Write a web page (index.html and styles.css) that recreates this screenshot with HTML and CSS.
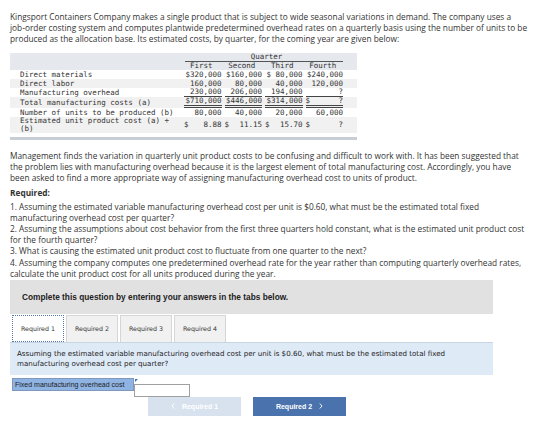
FILE: index.html
```html
<!DOCTYPE html>
<html lang="en">
<head>
    <meta charset="UTF-8">
    <meta name="viewport" content="width=device-width, initial-scale=1.0">
    <title>Kingsport Containers Company</title>
    <link rel="stylesheet" href="styles.css">
</head>
<body>
    <div class="page">
        <p class="text">Kingsport Containers Company makes a single product that is subject to wide seasonal variations in demand. The company uses a job&#8209;order costing system and computes plantwide predetermined overhead rates on a quarterly basis using the number of units to be produced as the allocation base. Its estimated costs, by quarter, for the coming year are given below:</p>

        <div class="table-wrap">
            <table class="costs">
                <thead>
                    <tr>
                        <th class="label"></th>
                        <th colspan="4" class="quarter"><span>Quarter</span></th>
                        <th class="spacer"></th>
                    </tr>
                    <tr>
                        <th class="label"></th>
                        <th class="num-head">First</th>
                        <th class="num-head">Second</th>
                        <th class="num-head">Third</th>
                        <th class="num-head">Fourth</th>
                        <th class="spacer"></th>
                    </tr>
                </thead>
                <tbody>
                    <tr>
                        <td class="label">Direct materials</td>
                        <td class="num">$320,000</td>
                        <td class="num">$160,000</td>
                        <td class="num">$ 80,000</td>
                        <td class="num">$240,000</td>
                        <td class="spacer"></td>
                    </tr>
                    <tr>
                        <td class="label">Direct labor</td>
                        <td class="num">160,000</td>
                        <td class="num">80,000</td>
                        <td class="num">40,000</td>
                        <td class="num">120,000</td>
                        <td class="spacer"></td>
                    </tr>
                    <tr>
                        <td class="label">Manufacturing overhead</td>
                        <td class="num"><span class="single">230,000</span></td>
                        <td class="num"><span class="single">206,000</span></td>
                        <td class="num"><span class="single">194,000</span></td>
                        <td class="num"><span class="single">?</span></td>
                        <td class="spacer"></td>
                    </tr>
                    <tr>
                        <td class="label">Total manufacturing costs (a)</td>
                        <td class="num"><span class="double">$710,000</span></td>
                        <td class="num"><span class="double">$446,000</span></td>
                        <td class="num"><span class="double">$314,000</span></td>
                        <td class="num"><span class="double cash"><span>$</span><span>?</span></span></td>
                        <td class="spacer"></td>
                    </tr>
                    <tr>
                        <td class="label">Number of units to be produced (b)</td>
                        <td class="num">80,000</td>
                        <td class="num">40,000</td>
                        <td class="num">20,000</td>
                        <td class="num">60,000</td>
                        <td class="spacer"></td>
                    </tr>
                    <tr>
                        <td class="label">Estimated unit product cost (a) ÷ (b)</td>
                        <td class="num"><span class="cash"><span>$</span><span>8.88</span></span></td>
                        <td class="num"><span class="cash"><span>$</span><span>11.15</span></span></td>
                        <td class="num"><span class="cash"><span>$</span><span>15.70</span></span></td>
                        <td class="num"><span class="cash"><span>$</span><span>?</span></span></td>
                        <td class="spacer"></td>
                    </tr>
                </tbody>
            </table>
        </div>

        <p class="text">Management finds the variation in quarterly unit product costs to be confusing and difficult to work with. It has been suggested that the problem lies with manufacturing overhead because it is the largest element of total manufacturing cost. Accordingly, you have been asked to find a more appropriate way of assigning manufacturing overhead cost to units of product.</p>

        <div class="required">
            <p class="text req-title">Required:</p>
            <p class="text">1. Assuming the estimated variable manufacturing overhead cost per unit is $0.60, what must be the estimated total fixed manufacturing overhead cost per quarter?</p>
            <p class="text">2. Assuming the assumptions about cost behavior from the first three quarters hold constant, what is the estimated unit product cost for the fourth quarter?</p>
            <p class="text">3. What is causing the estimated unit product cost to fluctuate from one quarter to the next?</p>
            <p class="text">4. Assuming the company computes one predetermined overhead rate for the year rather than computing quarterly overhead rates, calculate the unit product cost for all units produced during the year.</p>
        </div>

        <div class="prompt">Complete this question by entering your answers in the tabs below.</div>

        <div class="tabs">
            <button class="tab active">Required 1</button>
            <button class="tab">Required 2</button>
            <button class="tab">Required 3</button>
            <button class="tab">Required 4</button>
        </div>

        <div class="panel">Assuming the estimated variable manufacturing overhead cost per unit is $0.60, what must be the estimated total fixed manufacturing overhead cost per quarter?</div>

        <div class="answer-row">
            <label class="answer-label" for="fixed-cost">Fixed manufacturing overhead cost</label>
            <span class="answer-box"><input id="fixed-cost" class="answer-input" type="text"></span>
        </div>

        <div class="nav">
            <button class="nav-btn prev" disabled>
                <svg width="4" height="6" viewBox="0 0 4 6"><path d="M3.2 0.5 L1 3 L3.2 5.5" fill="none" stroke="#fff" stroke-width="0.9"/></svg>
                <span>Required 1</span>
            </button>
            <button class="nav-btn next">
                <span>Required 2</span>
                <svg width="4" height="6" viewBox="0 0 4 6"><path d="M0.8 0.5 L3 3 L0.8 5.5" fill="none" stroke="#fff" stroke-width="0.9"/></svg>
            </button>
        </div>
    </div>
</body>
</html>
```

FILE: styles.css
```css
body {
    margin: 0;
    font-family: "Open Sans", "Liberation Sans", sans-serif;
    color: #333;
    background-color: #fff;
}
.page {
    padding: 11px 30px 0 10px;
}
.text {
    margin: 0;
    font-size: 8.3px;
    line-height: 11.2px;
}

/* cost table */
.table-wrap {
    width: 347px;
    margin-top: 8px;
    padding-bottom: 4px;
    border-bottom: 3px solid #c9cdd6;
    margin-bottom: 10px;
}
.costs {
    border-collapse: collapse;
    width: 347px;
    font-family: "DejaVu Sans Mono", monospace;
    font-size: 7.5px;
    color: #333;
}
.costs th {
    font-weight: normal;
    background-color: #e5e8ed;
    height: 8.7px;
    line-height: 8px;
    padding: 0;
}
.costs td {
    padding: 0;
    height: 9px;
    line-height: 7.8px;
    vertical-align: middle;
}
.costs tbody tr:nth-child(even) {
    background-color: #f1f1f1;
}
.costs .label {
    width: 161px;
    padding-left: 10px;
    text-align: left;
}
.costs .spacer {
    width: 14px;
}
.quarter span {
    display: block;
    margin-left: 4px;
    margin-right: -5px;
    border-bottom: 1px solid #555;
    text-align: center;
}
.num-head {
    width: 40.5px;
    text-align: center;
}
.num {
    width: 40.5px;
    text-align: right;
    white-space: pre;
}
.single, .double {
    display: block;
    margin-left: 3px;
}
.single {
    border-bottom: 1px solid #444;
}
.double {
    border-bottom: 3px double #444;
}
.cash {
    display: flex;
    justify-content: space-between;
    margin-left: 3px;
}

.required {
    margin-top: 4px;
}
.req-title {
    font-weight: bold;
    margin-bottom: 2px;
}

/* answer area */
.prompt {
    width: 459px;
    margin-top: 1px;
    padding: 11px 12px;
    height: 12px;
    line-height: 12px;
    background-color: #e1e1e1;
    font-family: "Liberation Sans", Arial, sans-serif;
    font-size: 8.3px;
    font-weight: bold;
    color: #222;
}
.tabs {
    display: flex;
    gap: 2px;
    margin-top: 1px;
    padding-left: 2px;
}
.tab {
    width: 52px;
    height: 27px;
    padding: 0;
    background-color: #f1f1f1;
    border: 1px solid #d6d6d6;
    border-bottom: none;
    font-family: "DejaVu Sans", Verdana, sans-serif;
    font-size: 6.3px;
    color: #333;
}
.tab.active {
    background-color: #fff;
    border: 1px dotted #5577aa;
}
.panel {
    width: 469px;
    padding: 6px 7px 6px 7px;
    background-color: #dfeaf7;
    border-top: 1px solid #c8d4e2;
    font-family: "DejaVu Sans", Verdana, sans-serif;
    font-size: 7.1px;
    line-height: 10px;
    color: #222;
}
.answer-row {
    display: flex;
    margin-top: 3px;
    padding-left: 2px;
    height: 13px;
}
.answer-label {
    width: 118px;
    padding-left: 2px;
    background-color: #8fb3e2;
    border: 1px solid #7f99bd;
    font-family: "Liberation Sans", Arial, sans-serif;
    font-size: 7px;
    line-height: 11px;
    color: #222;
}
.answer-box {
    position: relative;
    display: block;
}
.answer-box::before {
    content: "";
    position: absolute;
    left: 1px;
    top: 1px;
    border-top: 3px solid #3d6fc0;
    border-right: 3px solid transparent;
}
.answer-input {
    box-sizing: border-box;
    width: 56px;
    height: 13px;
    margin: 0;
    border: 1px solid #a0a0a0;
    background-color: #fff;
}
.nav {
    display: flex;
    gap: 12px;
    margin-top: 6px;
    padding-left: 138px;
}
.nav-btn {
    display: flex;
    align-items: center;
    justify-content: center;
    gap: 7px;
    width: 93px;
    height: 19px;
    border: none;
    font-family: "Liberation Sans", Arial, sans-serif;
    font-size: 7px;
    font-weight: bold;
    color: #fff;
}
.nav-btn.prev {
    background-color: #d8e2ef;
}
.nav-btn.next {
    background-color: #4a73ae;
}
```
